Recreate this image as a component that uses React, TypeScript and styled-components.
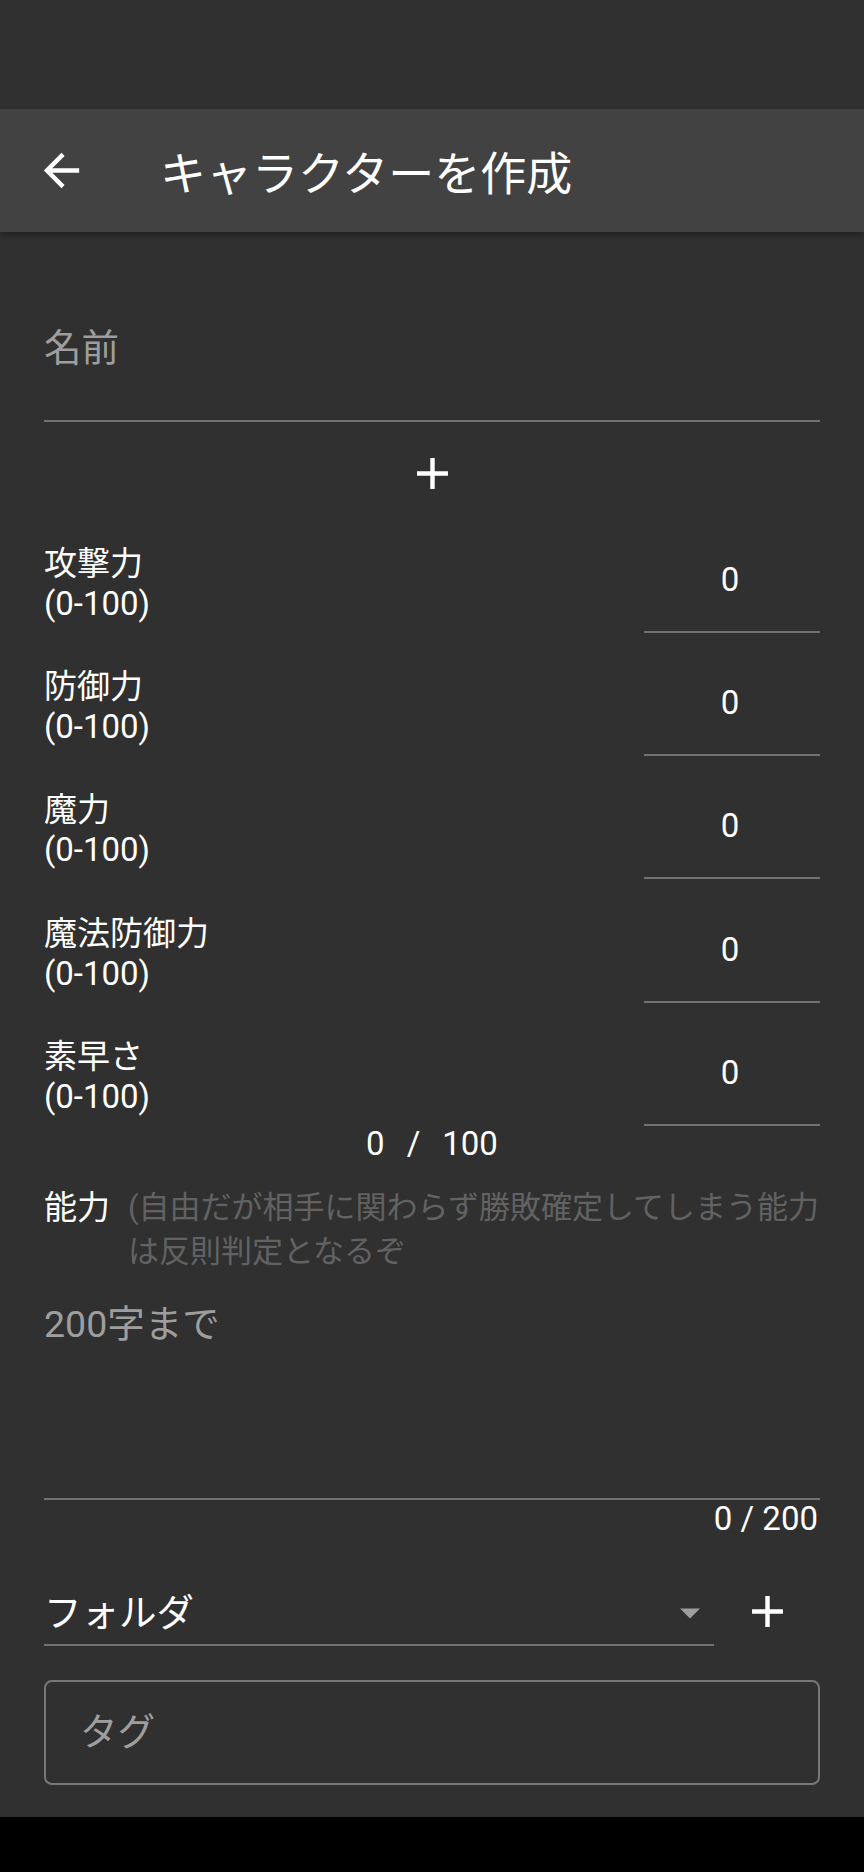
import React from 'react';
import styled, { createGlobalStyle } from 'styled-components';

const stats = ['攻撃力', '防御力', '魔力', '魔法防御力', '素早さ'];

const GlobalStyle = createGlobalStyle`
  body {
    margin: 0;
    background: #303030;
    font-family: Roboto, 'Noto Sans CJK JP', sans-serif;
  }
`;

const Screen = styled.div`
  width: 864px;
  height: 1872px;
  display: flex;
  flex-direction: column;
  background: #303030;
  color: #fff;
  overflow: hidden;
`;

const StatusBar = styled.div`
  height: 109px;
  flex-shrink: 0;
  background: #303030;
`;

const AppBar = styled.header`
  height: 123px;
  flex-shrink: 0;
  display: flex;
  align-items: center;
  padding-left: 35px;
  background: #424242;
  box-shadow: 0 3px 5px rgba(0, 0, 0, 0.3);
  position: relative;
  z-index: 1;
`;

const Title = styled.h1`
  margin: 6px 0 0 72px;
  font-size: 46px;
  font-weight: 400;
  line-height: 56px;
  color: #fff;
`;

const Content = styled.main`
  flex: 1;
  display: flex;
  flex-direction: column;
  padding: 0 44px;
`;

const UnderlineField = styled.div<{ height: number }>`
  height: ${(p) => p.height}px;
  border-bottom: 2px solid #727272;
`;

const Placeholder = styled.div`
  font-size: 37.5px;
  line-height: 48px;
  color: #9e9e9e;
`;

const NameField = styled(UnderlineField)`
  margin-top: 92px;
`;

const AddRow = styled.div`
  display: flex;
  justify-content: center;
  margin-top: 25px;
`;

const IconBox = styled.div<{ size: number }>`
  width: ${(p) => p.size}px;
  height: ${(p) => p.size}px;
  display: flex;
  align-items: center;
  justify-content: center;
  flex-shrink: 0;
`;

const StatList = styled.div`
  display: flex;
  flex-direction: column;
  gap: 29.2px;
  margin-top: 39px;
`;

const StatRow = styled.div`
  height: 94px;
  display: flex;
  justify-content: space-between;
  align-items: flex-start;
`;

const StatLabel = styled.div`
  padding-top: 5px;
  font-size: 33px;
  line-height: 40px;
  color: #fff;
`;

const StatInput = styled.div`
  width: 172px;
  height: 92px;
  padding-right: 4px;
  border-bottom: 2px solid #727272;
  text-align: center;
  font-size: 33px;
  line-height: 81px;
  color: #fff;
`;

const Total = styled.div`
  display: flex;
  justify-content: center;
  gap: 22px;
  font-size: 33px;
  line-height: 36px;
`;

const AbilityRow = styled.div`
  display: flex;
  gap: 18px;
  margin-top: 24px;
  font-size: 31px;
  line-height: 44px;
`;

const AbilityLabel = styled.div`
  color: #fff;
  font-size: 33px;
  flex-shrink: 0;
`;

const AbilityHint = styled.div`
  color: #626262;
  white-space: nowrap;
`;

const DescField = styled(UnderlineField)`
  margin-top: 26px;
`;

const CharCount = styled.div`
  text-align: right;
  padding-right: 2px;
  font-size: 33px;
  line-height: 38px;
  color: #fff;
`;

const FolderRow = styled.div`
  display: flex;
  align-items: flex-start;
  margin-top: 51px;
`;

const FolderSelect = styled.div`
  flex: 1;
  display: flex;
  justify-content: space-between;
  align-items: center;
  padding-bottom: 7px;
  border-bottom: 2px solid #727272;
`;

const FolderText = styled.div`
  font-size: 37.5px;
  line-height: 48px;
  color: #fff;
`;

const FolderAdd = styled.div`
  width: 106px;
  height: 46px;
  display: flex;
  justify-content: center;
  align-items: center;
`;

const TagBox = styled.div`
  margin-top: 34px;
  height: 101px;
  border: 2px solid #787878;
  border-radius: 8px;
  display: flex;
  align-items: center;
  padding-left: 34px;
`;

const NavBar = styled.div`
  height: 55px;
  flex-shrink: 0;
  background: #000;
`;

const BackIcon = () => (
  <svg width="53" height="53" viewBox="0 0 24 24" fill="#fff">
    <path d="M20 11H7.83l5.59-5.59L12 4l-8 8 8 8 1.41-1.41L7.83 13H20v-2z" />
  </svg>
);

const AddIcon = ({ size }: { size: number }) => (
  <svg width={size} height={size} viewBox="0 0 24 24" fill="#fff">
    <path d="M19 13h-6v6h-2v-6H5v-2h6V5h2v6h6v2z" />
  </svg>
);

const DropIcon = () => (
  <svg width="53" height="53" viewBox="0 0 24 24" fill="#9e9e9e">
    <path d="M7 10l5 5 5-5z" />
  </svg>
);

const App = () => {
  return (
    <Screen>
      <GlobalStyle />
      <StatusBar />
      <AppBar>
        <BackIcon />
        <Title>キャラクターを作成</Title>
      </AppBar>
      <Content>
        <NameField height={96}>
          <Placeholder>名前</Placeholder>
        </NameField>
        <AddRow>
          <IconBox size={53}>
            <AddIcon size={53} />
          </IconBox>
        </AddRow>
        <StatList>
          {stats.map((name) => (
            <StatRow key={name}>
              <StatLabel>
                {name}
                <br />
                (0-100)
              </StatLabel>
              <StatInput>0</StatInput>
            </StatRow>
          ))}
        </StatList>
        <Total>
          <span>0</span>
          <span>/</span>
          <span>100</span>
        </Total>
        <AbilityRow>
          <AbilityLabel>能力</AbilityLabel>
          <AbilityHint>
            (自由だが相手に関わらず勝敗確定してしまう能力
            <br />
            は反則判定となるぞ
          </AbilityHint>
        </AbilityRow>
        <DescField height={198}>
          <Placeholder>200字まで</Placeholder>
        </DescField>
        <CharCount>0 / 200</CharCount>
        <FolderRow>
          <FolderSelect>
            <FolderText>フォルダ</FolderText>
            <IconBox size={48}>
              <DropIcon />
            </IconBox>
          </FolderSelect>
          <FolderAdd>
            <AddIcon size={53} />
          </FolderAdd>
        </FolderRow>
        <TagBox>
          <Placeholder>タグ</Placeholder>
        </TagBox>
      </Content>
      <NavBar />
    </Screen>
  );
};

export default App;
